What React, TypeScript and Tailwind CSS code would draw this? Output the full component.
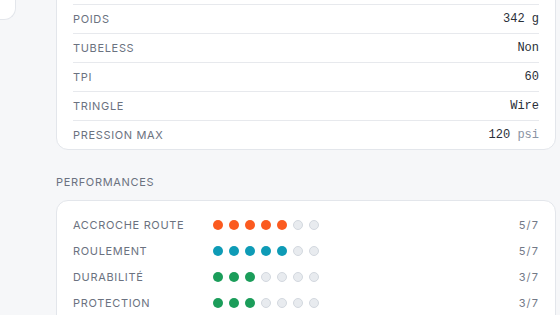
const specs = [
  { label: "Poids", value: "342 g", unit: "" },
  { label: "Tubeless", value: "Non", unit: "" },
  { label: "TPI", value: "60", unit: "" },
  { label: "Tringle", value: "Wire", unit: "" },
  { label: "Pression max", value: "120", unit: "psi" },
];

const perfs = [
  { label: "Accroche route", score: 5, color: "bg-[#fb5a1f]" },
  { label: "Roulement", score: 5, color: "bg-[#0e9bb6]" },
  { label: "Durabilité", score: 3, color: "bg-[#1b9d5a]" },
  { label: "Protection", score: 3, color: "bg-[#1b9d5a]" },
];

function Dots({ score, color }: { score: number; color: string }) {
  return (
    <div className="flex gap-1.5">
      {Array.from({ length: 7 }).map((_, i) => (
        <span
          key={i}
          className={
            i < score
              ? `w-2.5 h-2.5 rounded-full ${color}`
              : "w-2.5 h-2.5 rounded-full bg-[#e8ebef] border border-[#d3d8df]"
          }
        />
      ))}
    </div>
  );
}

export default function App() {
  return (
    <div
      className="h-[315px] w-[560px] overflow-hidden bg-[#f6f7f9]"
      style={{ fontFamily: "Inter, 'Noto Sans', sans-serif" }}
    >
      <div className="flex gap-10 -mt-[25px]">
        <div className="w-4 shrink-0">
          <div className="h-[45px] bg-white border-r border-b border-[#e3e6eb] rounded-br-xl" />
        </div>

        <div className="w-[500px] shrink-0">
          <div className="bg-white border border-[#e3e6eb] rounded-xl px-4">
            {/* row above, scrolled out of view */}
            <div className="h-[29px] border-b border-[#e7e9ed]" />
            {specs.map((s, i) => (
              <div
                key={s.label}
                className={`flex items-center justify-between h-[28px] ${
                  i < specs.length - 1 ? "border-b border-[#e7e9ed] h-[29px]" : ""
                }`}
              >
                <span className="text-[11px] uppercase tracking-[0.06em] text-[#6b7280]">
                  {s.label}
                </span>
                <span
                  className="text-[12px] text-[#2a2f38]"
                  style={{ fontFamily: "'Liberation Mono', monospace" }}
                >
                  {s.value}
                  {s.unit && <span className="text-[#8a93a3]"> {s.unit}</span>}
                </span>
              </div>
            ))}
          </div>

          <div className="mt-6 mb-2.5 h-4 flex items-center text-[11px] uppercase tracking-[0.06em] text-[#6b7280]">
            Performances
          </div>

          <div className="bg-white border border-[#e3e6eb] rounded-xl px-4 py-4 flex flex-col gap-2.5">
            {perfs.map((p) => (
              <div key={p.label} className="flex items-center h-4">
                <span className="w-[140px] text-[11px] uppercase tracking-[0.06em] text-[#6b7280]">
                  {p.label}
                </span>
                <Dots score={p.score} color={p.color} />
                <span className="ml-auto text-[11px] tracking-[0.1em] text-[#727987]">
                  {p.score}/7
                </span>
              </div>
            ))}
          </div>
        </div>
      </div>
    </div>
  );
}
